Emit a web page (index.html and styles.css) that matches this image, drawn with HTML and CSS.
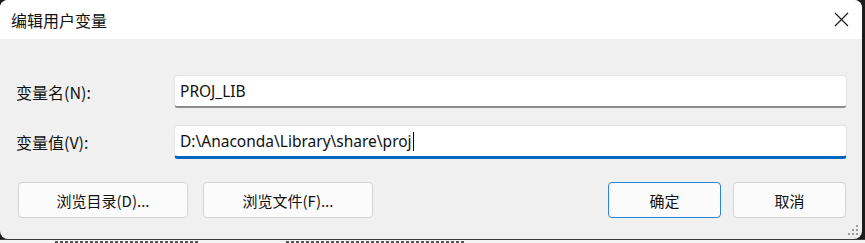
FILE: index.html
```html
<!DOCTYPE html>
<html lang="zh-CN">
<head>
  <meta charset="UTF-8">
  <title>编辑用户变量</title>
  <link rel="stylesheet" href="styles.css">
</head>
<body>
  <div class="dialog">
    <div class="titlebar">
      <span class="title">编辑用户变量</span>
      <span class="close">
        <svg width="15" height="15" viewBox="0 0 15 15"><path d="M1 1 L14 14 M14 1 L1 14" stroke="#1b1b1b" stroke-width="1.2" fill="none"/></svg>
      </span>
    </div>

    <div class="form">
      <label class="label">变量名(N):</label>
      <div class="field">PROJ_LIB</div>
      <label class="label">变量值(V):</label>
      <div class="field focused">D:\Anaconda\Library\share\proj<span class="caret"></span></div>
    </div>

    <div class="actions">
      <button class="btn wide">浏览目录(D)...</button>
      <button class="btn wide">浏览文件(F)...</button>
      <span class="spacer"></span>
      <button class="btn default">确定</button>
      <button class="btn">取消</button>
    </div>

    <svg class="grip" width="11" height="11" viewBox="0 0 11 11">
      <g fill="#9a9a9a">
        <rect x="8" y="0" width="2" height="2"/>
        <rect x="4" y="4" width="2" height="2"/><rect x="8" y="4" width="2" height="2"/>
        <rect x="0" y="8" width="2" height="2"/><rect x="4" y="8" width="2" height="2"/><rect x="8" y="8" width="2" height="2"/>
      </g>
    </svg>
  </div>

  <!-- list rows of the window behind, only their tops peek out -->
  <div class="behind">
    <span class="frag" style="width: 145px"></span>
    <span class="frag second" style="width: 180px"></span>
  </div>
</body>
</html>
```

FILE: styles.css
```css
html, body { margin: 0; padding: 0; }
body { width: 865px; height: 243px; overflow: hidden; background: #1c1c1c; font-family: "Segoe UI", "Noto Sans", "Noto Sans CJK SC", sans-serif; color: #111; }

.dialog { position: relative; width: 862px; height: 239px; background: #f0f0f0; border-radius: 8px; overflow: hidden; display: flex; flex-direction: column; }

.titlebar { height: 39px; background: #fff; display: flex; align-items: center; padding: 0 13px 0 11px; flex-shrink: 0; }
.title { font-family: "Noto Sans CJK SC", sans-serif; font-size: 16px; flex: 1; }
.close { display: flex; width: 15px; height: 15px; }

.form { display: grid; grid-template-columns: 158px 673px; row-gap: 17px; padding: 36px 0 0 16px; align-items: center; }
.label { font-family: "Noto Sans CJK SC", sans-serif; font-size: 16px; }
.field { height: 33px; box-sizing: border-box; background: #fff; border: 1px solid #e3e3e3; border-bottom: 2px solid #8c8c8c; border-radius: 4px; padding: 0 5px; font-size: 15.5px; display: flex; align-items: center; }
.field.focused { height: 34px; border-bottom: 3px solid #0067c0; }
.caret { display: inline-block; width: 1px; height: 19px; background: #000; margin-left: 1px; }

.actions { display: flex; padding: 23px 16px 0 18px; gap: 15px; }
.spacer { flex: 1; }
.btn { height: 36px; width: 113px; box-sizing: border-box; background: #fbfbfb; border: 1px solid #d4d4d4; border-radius: 4px; font-family: "Noto Sans CJK SC", sans-serif; font-size: 15px; color: #111; padding: 0; }
.btn.wide { width: 170px; }
.btn.default { border: 1.5px solid #2a84d8; margin-right: -3px; }

.grip { position: absolute; right: 3px; bottom: 3px; }

.behind { height: 3px; overflow: hidden; background: #f4f4f4; border-top: 1px solid #3a3a3a; display: flex; padding-left: 55px; gap: 86px; align-items: flex-end; }
.frag { height: 2px; background: repeating-linear-gradient(90deg, #555 0 3px, transparent 3px 5px); }
```
